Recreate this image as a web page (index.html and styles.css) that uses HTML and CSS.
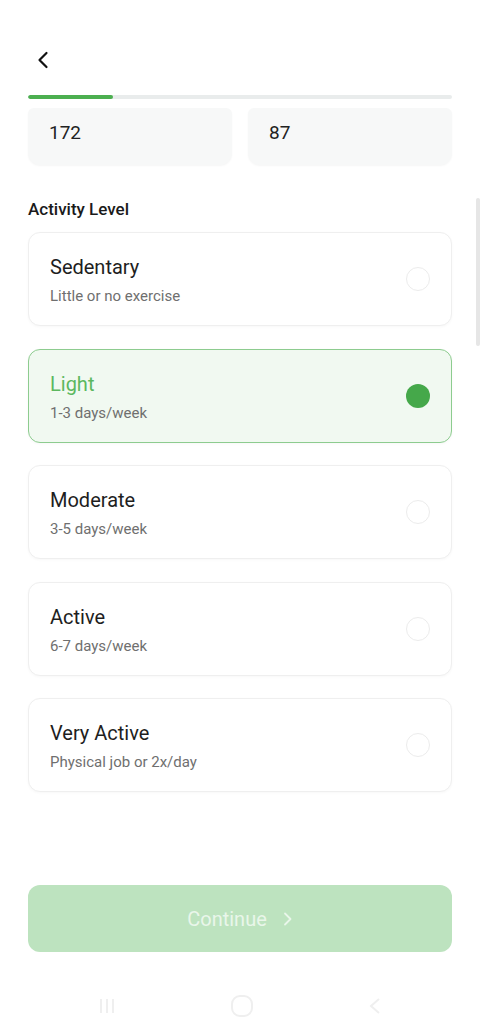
FILE: index.html
```html
<!DOCTYPE html>
<html lang="en">
<head>
<meta charset="utf-8">
<title>Activity Level</title>
<link rel="stylesheet" href="styles.css">
</head>
<body>
<div class="screen">
  <header class="top">
    <button class="back" aria-label="Back">
      <svg width="12" height="18" viewBox="0 0 12 18"><path d="M9.5 2 L2.5 9 L9.5 16" fill="none" stroke="#111" stroke-width="2.2" stroke-linecap="round" stroke-linejoin="round"/></svg>
    </button>
  </header>
  <div class="progress"><div class="fill" style="width:20%"></div></div>
  <div class="inputs">
    <div class="field">172</div>
    <div class="field">87</div>
  </div>
  <h2 class="label">Activity Level</h2>
  <div class="options">
    <div class="card">
      <div class="text"><div class="title">Sedentary</div><div class="sub">Little or no exercise</div></div>
      <span class="radio"></span>
    </div>
    <div class="card selected">
      <div class="text"><div class="title">Light</div><div class="sub">1-3 days/week</div></div>
      <span class="radio"></span>
    </div>
    <div class="card">
      <div class="text"><div class="title">Moderate</div><div class="sub">3-5 days/week</div></div>
      <span class="radio"></span>
    </div>
    <div class="card">
      <div class="text"><div class="title">Active</div><div class="sub">6-7 days/week</div></div>
      <span class="radio"></span>
    </div>
    <div class="card">
      <div class="text"><div class="title">Very Active</div><div class="sub">Physical job or 2x/day</div></div>
      <span class="radio"></span>
    </div>
  </div>
  <button class="continue">Continue
    <svg width="10" height="14" viewBox="0 0 10 14"><path d="M2 1.5 L7.5 7 L2 12.5" fill="none" stroke="currentColor" stroke-width="1.8" stroke-linecap="round" stroke-linejoin="round"/></svg>
  </button>
  <nav class="sysnav">
    <svg width="18" height="18" viewBox="0 0 18 18"><path d="M3 2v14M9 2v14M15 2v14" stroke="#efefef" stroke-width="2"/></svg>
    <svg width="24" height="24" viewBox="0 0 24 24"><rect x="2" y="2" width="20" height="20" rx="8" fill="none" stroke="#efefef" stroke-width="2"/></svg>
    <svg width="14" height="18" viewBox="0 0 14 18"><path d="M11 2 L3 9 L11 16" fill="none" stroke="#efefef" stroke-width="2"/></svg>
  </nav>
</div>
<div class="scrollbar"></div>
</body>
</html>
```
FILE: styles.css
```css
* { box-sizing: border-box; }
html, body { margin: 0; padding: 0; background: #fff; }
body { font-family: Roboto, "Noto Sans", Arial, sans-serif; color: #1e1e1e; }
.screen { width: 480px; height: 1023px; padding: 0 28px; display: flex; flex-direction: column; overflow: hidden; }
.top { padding-top: 51px; height: 68px; }
.back { border: 0; background: none; padding: 0 0 0 9px; display: block; cursor: pointer; }
.back svg { display: block; }
.progress { margin-top: 27px; height: 4px; border-radius: 2px; background: #e9ecec; overflow: hidden; }
.progress .fill { height: 100%; background: #4caf50; border-radius: 2px; }
.inputs { margin-top: 9px; display: flex; gap: 16px; }
.field { flex: 1; height: 57px; background: #f7f8f8; border-radius: 6px 6px 12px 12px; padding-left: 21px; display: flex; align-items: center; font-size: 19px; color: #222; box-shadow: 0 1px 2px rgba(0,0,0,0.04); padding-bottom: 9px; }
.label { margin: 33px 0 0; font-size: 17px; line-height: 22px; font-weight: 500; color: #1a1a1a; }
.options { margin-top: 12px; display: flex; flex-direction: column; gap: 22.5px; }
.card { height: 94px; border: 1px solid #efefef; border-radius: 12px; background: #fff; padding: 0 21px 0 21px; display: flex; align-items: center; justify-content: space-between; box-shadow: 0 1px 3px rgba(0,0,0,0.03); }
.text { padding-top: 2px; }
.title { font-size: 20px; line-height: 24px; color: #1e1e1e; }
.sub { font-size: 15px; line-height: 18px; color: #6f6f6f; margin-top: 8px; }
.radio { width: 24px; height: 24px; border-radius: 50%; border: 1.5px solid #ececec; flex: none; }
.card.selected { background: #f1f9f1; border: 1.5px solid #8dcc8f; }
.card.selected .title { color: #5cb85f; }
.card.selected .radio { border: none; background: #45a84a; }
.continue { margin-top: 93px; height: 67px; border: 0; border-radius: 12px; background: #bde3bf; color: #e9f6ea; font-family: inherit; font-size: 20px; display: flex; align-items: center; justify-content: center; gap: 16px; padding: 0; }
.continue svg { display: block; }
.sysnav { margin-top: 42px; display: flex; justify-content: space-between; padding: 0 70px 0 70px; align-items: center; }
.scrollbar { position: absolute; right: 0; top: 198px; width: 4px; height: 148px; border-radius: 2px; background: #e6e6e6; }
```
